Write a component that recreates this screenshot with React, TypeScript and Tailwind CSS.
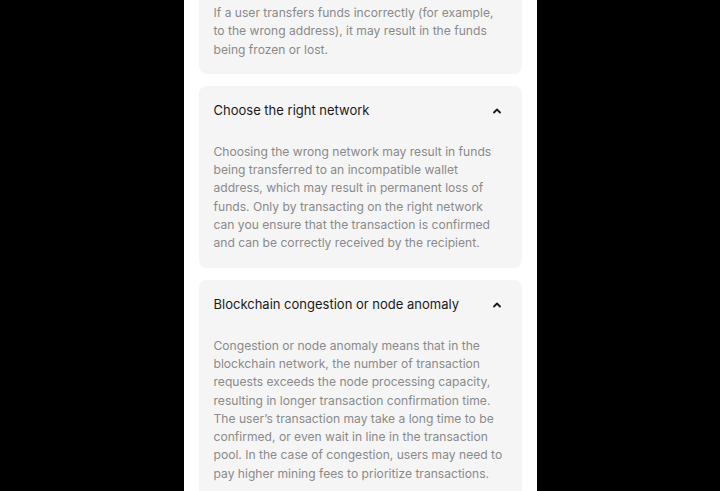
import React from "react";

const risks = [
  {
    title: "",
    body: "If a user transfers funds incorrectly (for example, to the wrong address), it may result in the funds being frozen or lost.",
  },
  {
    title: "Choose the right network",
    body: "Choosing the wrong network may result in funds being transferred to an incompatible wallet address, which may result in permanent loss of funds. Only by transacting on the right network can you ensure that the transaction is confirmed and can be correctly received by the recipient.",
  },
  {
    title: "Blockchain congestion or node anomaly",
    body: "Congestion or node anomaly means that in the blockchain network, the number of transaction requests exceeds the node processing capacity, resulting in longer transaction confirmation time. The user\u2019s transaction may take a long time to be confirmed, or even wait in line in the transaction pool. In the case of congestion, users may need to pay higher mining fees to prioritize transactions.",
  },
];

function Caret() {
  return (
    <svg width="8" height="6" viewBox="0 0 8 6" className="shrink-0">
      <path d="M1 4.5 L4 1.5 L7 4.5" fill="none" stroke="#1a1a1a" strokeWidth="1.8" strokeLinecap="round" strokeLinejoin="round" />
    </svg>
  );
}

export default function App() {
  return (
    <div className="h-[491px] overflow-hidden bg-black">
      <div
        className="mx-auto w-[353px] min-h-full bg-white px-[15px] pb-6"
        style={{ fontFamily: "Inter, 'Noto Sans', sans-serif" }}
      >
        <div className="-mt-[20px] flex flex-col gap-3">
          {risks.map((r, i) =>
            r.title ? (
              <div key={i} className="rounded-lg bg-[#f5f5f5] px-[15px] pt-[17px] pb-[15px]">
                <div className="flex items-center justify-between pr-[6px] h-[16px]">
                  <span className="text-[13px] text-[#1a1a1a]">{r.title}</span>
                  <Caret />
                </div>
                <p className="mt-[24px] text-[12.1px] leading-[18.3px] text-[#8a8a8a]">{r.body}</p>
              </div>
            ) : (
              <div key={i} className="rounded-lg bg-[#f5f5f5] px-[15px] pt-[24px] pb-[15px]">
                <p className="text-[12.1px] leading-[18.3px] text-[#8a8a8a]">{r.body}</p>
              </div>
            )
          )}
        </div>
      </div>
    </div>
  );
}
